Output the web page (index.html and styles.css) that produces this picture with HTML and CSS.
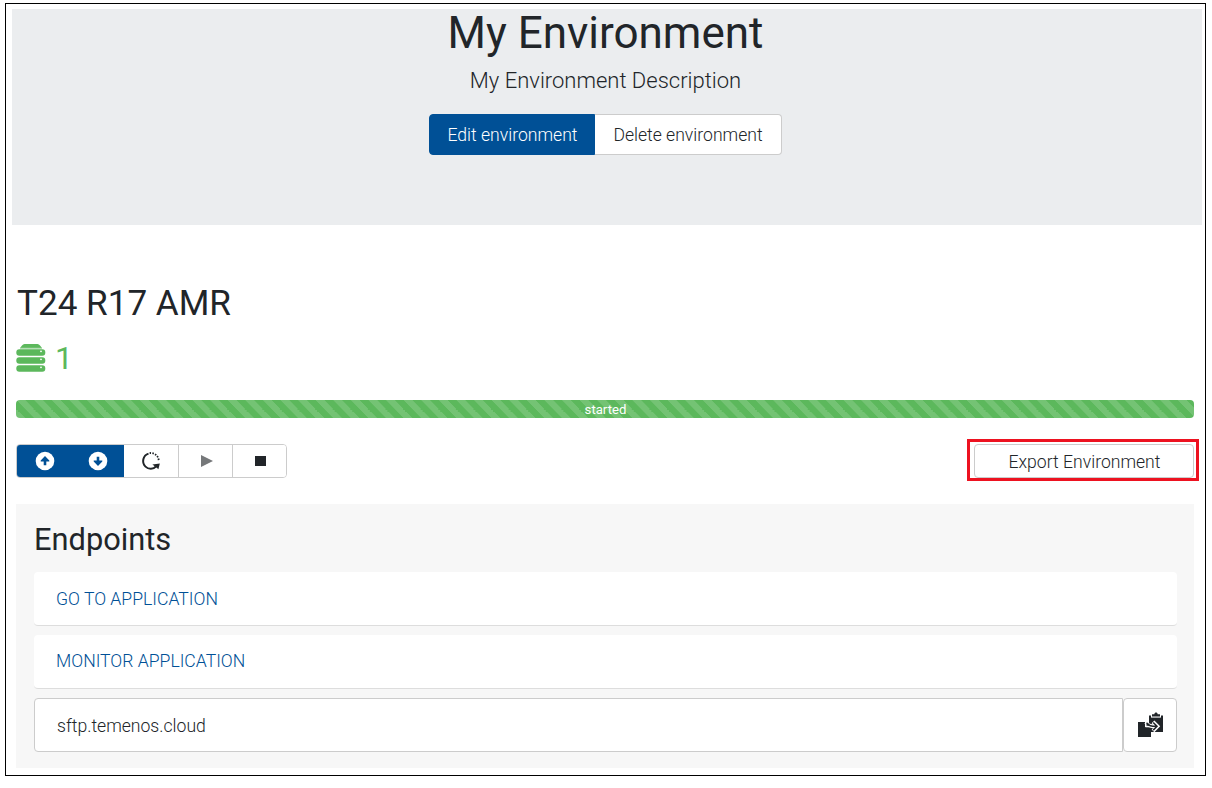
FILE: index.html
```html
<!DOCTYPE html>
<html lang="en">
<head>
<meta charset="utf-8">
<title>My Environment</title>
<link rel="stylesheet" href="styles.css">
</head>
<body>
<div class="frame">
  <header class="hero">
    <h1 class="hero-title">My Environment</h1>
    <p class="hero-text">My Environment Description</p>
    <div class="hero-actions">
      <button class="btn btn-primary btn-edit">Edit environment</button>
      <button class="btn btn-outline btn-delete">Delete environment</button>
    </div>
  </header>
  <main class="content">
    <h2 class="product">T24 R17 AMR</h2>
    <div class="servers">
      <svg class="server-icon" viewBox="0 0 30 28" width="30" height="28" fill="#5cb85c">
        <path d="M8.5 0H21.5Q23 0 24 1.5L26 4H4L6 1.5Q7 0 8.5 0Z"/>
        <path d="M4 4.5H26" stroke="#b5dfb5" stroke-width="1.4"/>
        <rect x="0.3" y="5.2" width="29" height="6.5" rx="3"/>
        <rect x="0.3" y="13.2" width="29" height="6.5" rx="3"/>
        <rect x="0.3" y="21.2" width="29" height="6.5" rx="3"/>
        <g fill="#fff"><circle cx="25" cy="7.3" r=".9"/><circle cx="25" cy="15.3" r=".9"/><circle cx="25" cy="23.3" r=".9"/></g>
      </svg>
      <span class="server-count">1</span>
    </div>
    <div class="progress">started</div>
    <div class="toolbar">
      <div class="controls">
        <button class="control control-primary" aria-label="Scale up">
          <svg viewBox="0 0 20 20" width="20" height="20"><circle cx="10" cy="10" r="9.3" fill="#fff"/><path d="M10 5L14.3 9.6V10.6H11.3V14.2H8.7V10.6H5.7V9.6Z" fill="#005096"/></svg>
        </button>
        <button class="control control-primary control-down" aria-label="Scale down">
          <svg viewBox="0 0 20 20" width="20" height="20"><circle cx="10" cy="10" r="9.3" fill="#fff"/><path d="M10 15L14.3 10.4V9.4H11.3V5.8H8.7V9.4H5.7V10.4Z" fill="#005096"/></svg>
        </button>
        <button class="control control-restart" aria-label="Restart">
          <svg viewBox="0 0 20 20" width="20" height="20" fill="none" stroke="#212529"><path d="M7.5 2.6A7.8 7.8 0 0 0 4.5 15.6C7.5 18.6 12.5 18.3 15 15.5" stroke-width="2"/><path d="M8.6 2.1A7.8 7.8 0 0 1 17.7 9.5" stroke-width="1.8" stroke-dasharray="1.5 1.3"/><path d="M11.4 13.4L18.8 12.4L17.4 18.2L15.4 16.6Z" fill="#212529" stroke="none"/></svg>
        </button>
        <button class="control control-muted" aria-label="Start">
          <svg viewBox="0 0 20 20" width="20" height="20"><path d="M4 4L16 10L4 16Z" fill="#76787a"/></svg>
        </button>
        <button class="control control-stop" aria-label="Stop">
          <svg viewBox="0 0 20 20" width="20" height="20"><path d="M5 5H16V15H5Z" fill="#212529"/></svg>
        </button>
      </div>
      <div class="highlight"><button class="btn btn-outline btn-export">Export Environment</button></div>
    </div>
    <section class="endpoints">
      <h3 class="endpoints-title">Endpoints</h3>
      <a class="endpoint goto">GO TO APPLICATION</a>
      <a class="endpoint monitor">MONITOR APPLICATION</a>
      <div class="sftp">
        <div class="address">sftp.temenos.cloud</div>
        <button class="copy" aria-label="Copy">
          <svg viewBox="0 0 26 26" width="26" height="26"><path d="M12 3.5H26V20H12Z" fill="#212529"/><path d="M14 3H24V5.6H14Z" fill="#fff"/><path d="M15 4.4V2.3H17.3C17.5-.2 20.5-.2 20.7 2.3H23V4.4Z" fill="#212529"/><path d="M1 10H8V15H14V25H1Z" fill="#212529"/><path d="M8.5 10V14.8H14" fill="none" stroke="#fff"/><path d="M9 10.5C11 13.6 13 14.3 18 14.3M16 9.8L20.5 14.3L16 18.8" fill="none" stroke="#fff" stroke-width="3.8"/><path d="M9.5 10.3L13 13.8H9.5Z" fill="#212529"/><path d="M10 11C12 13.8 13.5 14.3 20 14.3M16.2 10.5L20 14.3L16.2 18.1" fill="none" stroke="#212529" stroke-width="1.5"/></svg>
        </button>
      </div>
    </section>
  </main>
</div>
</body>
</html>
```
FILE: styles.css
```css
* { box-sizing: border-box; }
body { margin: 0; padding: 3px 6px 0 5px; background: #fff; color: #212529; font: 300 17.6px/1.5 Roboto, sans-serif; }
h1, h2, h3, p { margin: 0; font-weight: 400; }
button { font: inherit; color: inherit; margin: 0; padding: 0; }
svg { display: block; }
.frame { height: 773px; border: 1px solid #000; padding: 5px 3px 0 6px; }
.hero { height: 216px; background: #ebedef; display: flex; flex-direction: column; align-items: center; padding-right: 3px; }
.hero-title { font-size: 44px; line-height: 48px; }
.hero-text { font-size: 22px; line-height: 32px; margin-top: 8px; font-weight: 300; }
.hero-actions { display: flex; margin-top: 17px; }
.btn { height: 41px; border: 1px solid #ccc; background: #fff; white-space: nowrap; padding-top: 2px; }
.btn-primary { background: #005096; border-color: #005096; color: #fff; border-radius: 4px 0 0 4px; }
.btn-edit { width: 166px; padding-left: 1px; }
.btn-delete { width: 187px; border-left: 0; border-radius: 0 4px 4px 0; }
.content { padding: 53px 8px 0 4px; }
.product { font-size: 35.1px; line-height: 50px; padding-left: 1px; }
.servers { display: flex; height: 30px; margin-top: 15px; align-items: center; color: #5cb85c; }
.server-count { margin-left: 9px; font-size: 32px; line-height: 30px; font-weight: 400; }
.progress { height: 18px; margin-top: 27px; border-radius: 4px; color: #fff; text-align: center; font-size: 13.2px; line-height: 19px; font-weight: 400; background: #5cb85c linear-gradient(45deg, rgba(255,255,255,.15) 25%, transparent 25%, transparent 50%, rgba(255,255,255,.15) 50%, rgba(255,255,255,.15) 75%, transparent 75%) 0 0 / 17.6px 17.6px; padding-left: 1px; }
.toolbar { display: flex; justify-content: space-between; align-items: flex-start; height: 65px; margin: 21px -5px 0 0; }
.controls { display: flex; margin-top: 5px; width: 271px; height: 34px; border: 1px solid #ccc; border-radius: 4px; overflow: hidden; }
.control { width: 54px; height: 32px; border: 0; border-right: 1px solid #ccc; background: #fff; display: flex; align-items: center; justify-content: center; }
.control-primary { background: #005096; border: 0; outline: 1px solid #005096; }
.control-primary:first-child { padding-left: 1px; }
.control-down { width: 53px; }
.control-restart { width: 55px; }
.control-muted { padding-left: 2px; }
.control-stop { width: 53px; border-right: 0; }
.highlight { width: 232px; height: 42px; border: 3px solid #ed1220; padding: 2px 2px 0 4px; }
.btn-export { display: block; width: 220px; height: 34px; border-radius: 4px; padding: 3px 0 0 1px; }
.endpoints { height: 264px; background: #f7f7f7; padding: 17px 17px 0 18px; }
.endpoints-title { font-size: 30.8px; line-height: 38px; }
.endpoint { display: flex; align-items: center; height: 54px; padding: 2px 0 0 22px; background: #fff; border-bottom: 1px solid #ddd; border-radius: 4px; color: #005096; }
.goto { margin-top: 13px; }
.monitor { margin-top: 9px; padding-top: 0; }
.sftp { display: flex; height: 54px; margin-top: 9px; }
.address { flex: 1; border: 1px solid #ccc; border-radius: 4px 0 0 4px; background: #fff; padding: 2px 22px 0; display: flex; align-items: center; }
.copy { width: 54px; border: 1px solid #ccc; border-radius: 4px; background: #fff; display: flex; align-items: center; justify-content: center; }
```
